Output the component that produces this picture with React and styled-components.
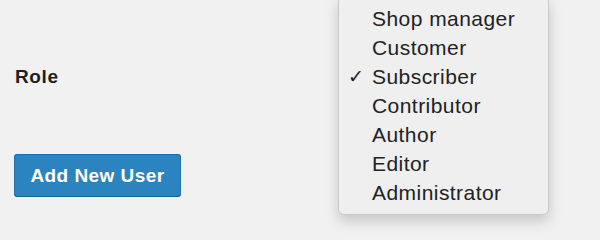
import styled, { createGlobalStyle } from "styled-components";

const Global = createGlobalStyle`
  html, body {
    margin: 0;
    background: #f1f1f1;
    font-family: "Liberation Sans", Arial, sans-serif;
  }
`;

const Page = styled.div`
  position: relative;
  width: 600px;
  height: 240px;
  overflow: hidden;
`;

const Form = styled.div`
  display: flex;
  flex-direction: column;
  padding: 65px 0 0 14px;
`;

const Label = styled.div`
  font-size: 19px;
  font-weight: 700;
  color: #1e1e1e;
  padding-left: 1px;
  line-height: 24px;
  letter-spacing: 0.6px;
`;

const Button = styled.button`
  margin-top: 65px;
  align-self: flex-start;
  width: 167px;
  height: 43px;
  background: #2b83bf;
  border: 1px solid #1f6ea6;
  border-bottom-color: #17608f;
  border-radius: 3px;
  color: #fff;
  font-family: "Liberation Sans", Arial, sans-serif;
  font-size: 19px;
  font-weight: 700;
  letter-spacing: 0.45px;
  padding: 0;
`;

const Menu = styled.ul`
  position: absolute;
  left: 338px;
  top: -4px;
  width: 209px;
  margin: 0;
  padding: 7px 0 7px;
  list-style: none;
  background: #efefef;
  border: 1px solid #c9c9c9;
  border-radius: 6px;
  box-shadow: 0 6px 14px rgba(0, 0, 0, 0.18);
`;

const Item = styled.li`
  position: relative;
  padding-left: 33px;
  height: 29px;
  line-height: 29px;
  font-size: 21px;
  letter-spacing: 0.45px;
  color: #222;
`;

const Check = styled.span`
  position: absolute;
  left: 9px;
  top: 0;
  font-size: 19px;
  letter-spacing: 0;
`;

const roles = [
  "Shop manager",
  "Customer",
  "Subscriber",
  "Contributor",
  "Author",
  "Editor",
  "Administrator",
];

export default function App() {
  return (
    <Page>
      <Global />
      <Form>
        <Label>Role</Label>
        <Button>Add New User</Button>
      </Form>
      <Menu>
        {roles.map((r) => (
          <Item key={r}>
            {r === "Subscriber" && <Check>✓</Check>}
            {r}
          </Item>
        ))}
      </Menu>
    </Page>
  );
}
